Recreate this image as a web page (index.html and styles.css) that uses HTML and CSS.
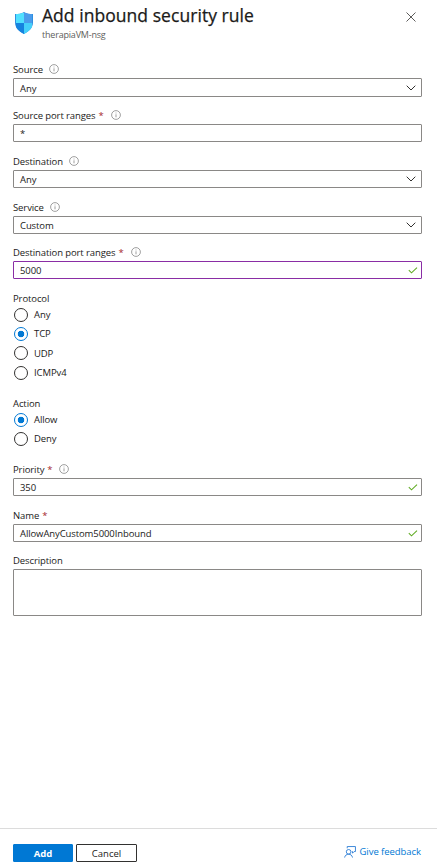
FILE: index.html
```html
<!DOCTYPE html>
<html lang="en">
  <head>
    <meta charset="UTF-8" />
    <meta name="viewport" content="width=device-width, initial-scale=1.0" />
    <title>Add inbound security rule</title>
    <link rel="stylesheet" href="styles.css">
  </head>
  <body>
    <!-- Shared icons -->
    <svg class="sprite" width="0" height="0">
      <symbol id="info" viewBox="0 0 10 10">
        <circle cx="5" cy="5" r="4.4" fill="none" stroke="#777" stroke-width="0.7" />
        <path d="M5 4.3V7.3M5 2.6V3.4" stroke="#777" stroke-width="0.7" />
      </symbol>
      <symbol id="chevron" viewBox="0 0 10 6">
        <path d="M0.7 0.7L5 5L9.3 0.7" fill="none" stroke="#323130" stroke-width="1" />
      </symbol>
      <symbol id="check" viewBox="0 0 10 7">
        <path d="M0.8 3.2L3.5 5.8L9 0.6" fill="none" stroke="#5fab22" stroke-width="1.05" />
      </symbol>
    </svg>

    <div class="panel">
      <header class="header">
        <svg class="shield" width="18" height="22" viewBox="0 0 18 22">
          <clipPath id="shield-shape">
            <path d="M9 0C11.5 1.8 14.5 2 18 2V10.5C18 16 13.5 19.5 9 22C4.500 19.500 0 16 0 10.500V2C3.500 2 6.500 1.800 9 0Z" />
          </clipPath>
          <g clip-path="url(#shield-shape)">
            <rect width="18" height="22" fill="#2f8fe0" />
            <rect x="1" y="1" width="8" height="10" fill="#50e0ff" />
            <rect x="9" y="1" width="8" height="10" fill="#4a9cec" />
            <rect x="1" y="11" width="8" height="11" fill="#1683df" />
            <rect x="9" y="11" width="8" height="11" fill="#45d0fa" />
          </g>
        </svg>
        <div class="heading">
          <h1 class="title">Add inbound security rule</h1>
          <p class="subtitle">therapiaVM-nsg</p>
        </div>
        <button class="close" aria-label="Close">
          <svg width="10" height="10" viewBox="0 0 10 10">
            <path d="M0.500 0.500L9.500 9.500M9.500 0.500L0.500 9.500" stroke="#323130" stroke-width="0.8" />
          </svg>
        </button>
      </header>

      <form class="form">
        <div class="field">
          <div class="label">Source <svg class="info"><use href="#info" /></svg></div>
          <div class="control tall">Any <svg class="chevron"><use href="#chevron" /></svg></div>
        </div>
        <div class="field">
          <div class="label">Source port ranges <span class="required">*</span> <svg class="info"><use href="#info" /></svg></div>
          <div class="control">*</div>
        </div>
        <div class="field">
          <div class="label">Destination <svg class="info"><use href="#info" /></svg></div>
          <div class="control">Any <svg class="chevron"><use href="#chevron" /></svg></div>
        </div>
        <div class="field">
          <div class="label">Service <svg class="info"><use href="#info" /></svg></div>
          <div class="control">Custom <svg class="chevron"><use href="#chevron" /></svg></div>
        </div>
        <div class="field">
          <div class="label">Destination port ranges <span class="required">*</span> <svg class="info"><use href="#info" /></svg></div>
          <div class="control active">5000 <svg class="check"><use href="#check" /></svg></div>
        </div>

        <div class="group protocol">
          <div class="label">Protocol</div>
          <label class="option"><input type="radio" name="protocol" />Any</label>
          <label class="option"><input type="radio" name="protocol" checked />TCP</label>
          <label class="option"><input type="radio" name="protocol" />UDP</label>
          <label class="option"><input type="radio" name="protocol" />ICMPv4</label>
        </div>
        <div class="group action">
          <div class="label">Action</div>
          <label class="option"><input type="radio" name="action" checked />Allow</label>
          <label class="option"><input type="radio" name="action" />Deny</label>
        </div>

        <div class="field">
          <div class="label">Priority <span class="required">*</span> <svg class="info"><use href="#info" /></svg></div>
          <div class="control">350 <svg class="check"><use href="#check" /></svg></div>
        </div>
        <div class="field">
          <div class="label">Name <span class="required">*</span></div>
          <div class="control">AllowAnyCustom5000Inbound <svg class="check"><use href="#check" /></svg></div>
        </div>
        <div class="field">
          <div class="label">Description</div>
          <div class="control textarea"></div>
        </div>
      </form>

      <footer class="footer">
        <button class="btn btn-primary">Add</button>
        <button class="btn">Cancel</button>
        <a class="feedback">
          <svg width="12" height="12" viewBox="0 0 13 13" fill="none" stroke="#2f7fd6" stroke-width="1">
            <circle cx="5" cy="6.300" r="2.500" />
            <path d="M0.700 12.500C1 10.200 2.800 8.900 5 8.900S8.800 10.200 9.200 12.500" />
            <path d="M3.500 2.500V0.600H12.400V6H11L9.200 7.800V6H8.500" />
          </svg>
          <span>Give feedback</span>
        </a>
      </footer>
    </div>
  </body>
</html>
```
FILE: styles.css
```css
* {
  margin: 0;
  padding: 0;
  box-sizing: border-box;
}

body {
  font-family: "Open Sans", "Segoe UI", sans-serif;
  font-size: 9.5px;
  letter-spacing: -0.1px;
  color: #1b1a19;
  background: #fff;
}

button {
  font: inherit;
  color: inherit;
}

.sprite {
  display: block;
}

.panel {
  height: 863px;
  display: flex;
  flex-direction: column;
  overflow: hidden;
}

/* Header */
.header {
  display: flex;
  align-items: flex-start;
  height: 61px;
  padding: 4px 21px 0 15px;
}

.shield {
  margin-top: 8px;
}

.heading {
  flex: 1;
  margin-left: 9px;
}

.title {
  font-size: 17.5px;
  font-weight: 500;
  line-height: 22px;
  letter-spacing: 0.05px;
  white-space: nowrap;
  -webkit-text-stroke: 0.25px #1b1a19;
}

.subtitle {
  font-size: 9px;
  line-height: 12px;
  letter-spacing: -0.2px;
  margin-top: 3px;
  color: #605e5c;
}

.close {
  display: flex;
  margin-top: 8px;
  border: none;
  background: none;
}

/* Form */
.form {
  flex: 1;
  padding: 0 15px 0 13px;
}

.field {
  margin-bottom: 11px;
}

.field:nth-child(1),
.field:nth-child(4),
.field:nth-last-child(2) {
  margin-bottom: 10px;
}

.label {
  display: flex;
  align-items: center;
  height: 17px;
  padding-bottom: 1px;
  white-space: nowrap;
}

.required {
  margin-left: 3px;
  color: #a4262c;
}

.info {
  width: 10px;
  height: 10px;
  margin-left: 6px;
}

.required + .info {
  margin-left: 7px;
}

.control {
  display: flex;
  align-items: center;
  justify-content: space-between;
  height: 18px;
  padding: 0 6px;
  border: 1px solid #8a8886;
  border-radius: 1px;
}

.control.tall {
  height: 19px;
  padding-top: 1px;
}

.control.active {
  border-color: #8a2da5;
}

.control.textarea {
  height: 47px;
}

.chevron {
  width: 10px;
  height: 6px;
  margin-right: -1px;
}

.check {
  width: 10px;
  height: 7px;
  margin-right: -3px;
}

/* Radio groups */
.group {
  display: flex;
  flex-direction: column;
}

.group .label {
  height: 15px;
  padding: 1px 0 0;
}

.protocol {
  height: 105px;
}

.action {
  height: 66px;
}

.option {
  display: flex;
  align-items: center;
  height: 19.3px;
}

.option input {
  appearance: none;
  width: 14px;
  height: 14px;
  margin: 0 6px 0 1px;
  border: 1px solid #323130;
  border-radius: 50%;
}

.option input:checked {
  border-color: #0078d4;
  background: radial-gradient(circle, #0078d4 3px, transparent 3.6px);
}

/* Footer */
.footer {
  display: flex;
  align-items: flex-start;
  height: 35px;
  padding: 15px 16px 0 13px;
  border-top: 1px solid #dcdcdc;
}

.btn {
  width: 61px;
  height: 18px;
  border: 1px solid #323130;
  border-radius: 1px;
  background: #fff;
}

.btn-primary {
  width: 60px;
  margin-right: 3px;
  border-color: #0078d4;
  background: #0078d4;
  color: #fff;
  font-weight: 700;
}

.feedback {
  display: flex;
  align-items: center;
  gap: 3px;
  height: 15px;
  margin-left: auto;
  letter-spacing: -0.05px;
  color: #0078d4;
}
```
